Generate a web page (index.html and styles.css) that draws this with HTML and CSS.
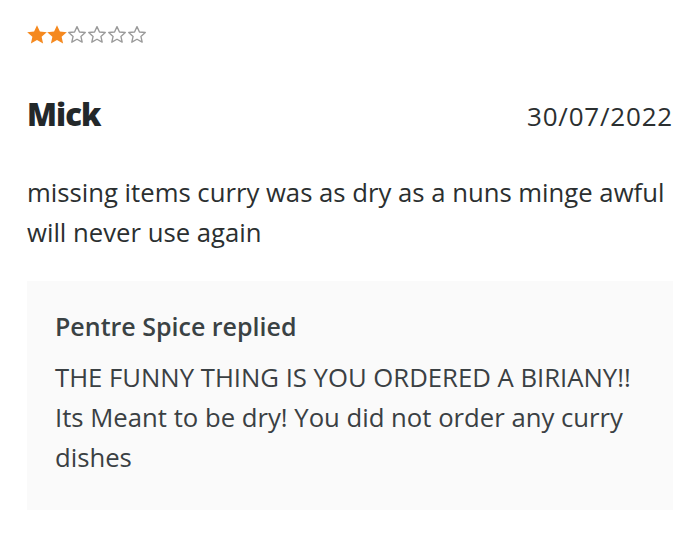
FILE: index.html
```html
<!DOCTYPE html>
<html>
<head>
<meta charset="utf-8">
<link rel="stylesheet" href="styles.css">
</head>
<body>
<div class="review">
  <div class="stars">
    <svg class="star" viewBox="2 2 20 20" width="20" height="20"><path class="fill" d="M12 2.2l2.9 6.3 6.9.7-5.2 4.6 1.5 6.8L12 17.1l-6.1 3.5 1.5-6.8L2.2 9.2l6.9-.7z"/></svg>
    <svg class="star" viewBox="2 2 20 20" width="20" height="20"><path class="fill" d="M12 2.2l2.9 6.3 6.9.7-5.2 4.6 1.5 6.8L12 17.1l-6.1 3.5 1.5-6.8L2.2 9.2l6.9-.7z"/></svg>
    <svg class="star" viewBox="1 1 22 22" width="20" height="20"><path class="empty" d="M12 2.8l2.7 5.9 6.4.6-4.8 4.3 1.4 6.3L12 16.7l-5.7 3.2 1.4-6.3-4.8-4.3 6.4-.6z"/></svg>
    <svg class="star" viewBox="1 1 22 22" width="20" height="20"><path class="empty" d="M12 2.8l2.7 5.9 6.4.6-4.8 4.3 1.4 6.3L12 16.7l-5.7 3.2 1.4-6.3-4.8-4.3 6.4-.6z"/></svg>
    <svg class="star" viewBox="1 1 22 22" width="20" height="20"><path class="empty" d="M12 2.8l2.7 5.9 6.4.6-4.8 4.3 1.4 6.3L12 16.7l-5.7 3.2 1.4-6.3-4.8-4.3 6.4-.6z"/></svg>
    <svg class="star" viewBox="1 1 22 22" width="20" height="20"><path class="empty" d="M12 2.8l2.7 5.9 6.4.6-4.8 4.3 1.4 6.3L12 16.7l-5.7 3.2 1.4-6.3-4.8-4.3 6.4-.6z"/></svg>
  </div>
  <div class="header">
    <h2 class="name">Mick</h2>
    <span class="date">30/07/2022</span>
  </div>
  <p class="body">missing items curry was as dry as a nuns minge awful will never use again</p>
  <div class="reply">
    <h3 class="reply-title">Pentre Spice replied</h3>
    <p class="reply-body">THE FUNNY THING IS YOU ORDERED A BIRIANY!! Its Meant to be dry! You did not order any curry dishes</p>
  </div>
</div>
</body>
</html>
```

FILE: styles.css
```css
html, body {
  margin: 0;
  padding: 0;
  background: #ffffff;
}
body {
  font-family: "Open Sans", "Noto Sans", sans-serif;
  color: #2b2f30;
}
.review {
  padding: 25px 27px 0 27px;
}
.stars {
  display: flex;
  height: 20px;
  align-items: center;
}
.star {
  display: block;
}
.star .fill {
  fill: #f5891f;
}
.star .empty {
  fill: #ffffff;
  stroke: #9a9a9a;
  stroke-width: 1.5;
  stroke-linejoin: round;
}
.header {
  display: flex;
  justify-content: space-between;
  align-items: baseline;
  margin-top: 49px;
}
.name {
  margin: 0;
  font-size: 31px;
  font-weight: 800;
  line-height: 40px;
  color: #23282a;
  letter-spacing: -0.9px;
}
.date {
  font-size: 26px;
  line-height: 40px;
  color: #2b2f30;
  letter-spacing: 0.8px;
}
.body {
  margin: 37px 0 0 0;
  font-size: 25.7px;
  line-height: 40px;
}
.reply {
  margin-top: 28px;
  background: #fafafa;
  padding: 25px 28px 32px 28px;
}
.reply-title {
  margin: 0;
  font-size: 25px;
  font-weight: 600;
  line-height: 40px;
  color: #3a4244;
}
.reply-body {
  margin: 12px 0 0 0;
  font-size: 25.7px;
  line-height: 40px;
  color: #3a4043;
}
```
